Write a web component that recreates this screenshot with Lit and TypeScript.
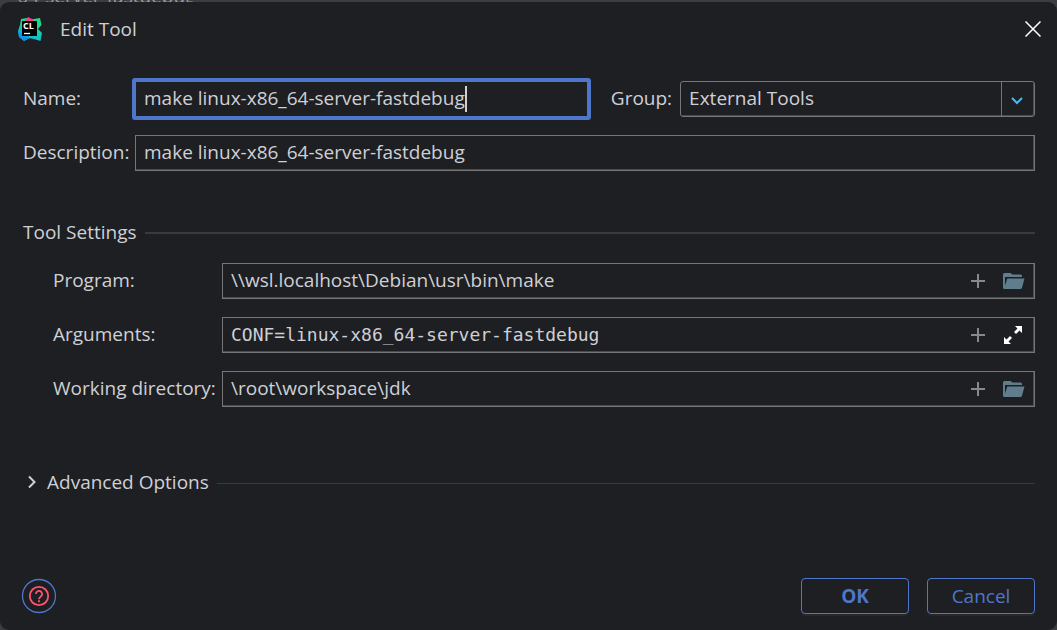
import { LitElement, html, css, svg } from "lit";
import { customElement, property, state } from "lit/decorators.js";

const plusIcon = svg`<svg width="14" height="14" viewBox="0 0 14 14"><path d="M7 0v14M0 7h14" stroke="#868a8c" stroke-width="2" fill="none"/></svg>`;
const folderIcon = svg`<svg width="22" height="16" viewBox="0 0 22 16"><path d="M0 14.500V1.500Q0 0 1.500 0H7.500L9.500 1.500H17.500Q19 1.500 19 3V4H2V12.500L4.300 5.500H21.500L19 14.700Q18.600 16 17.400 16H1.500Q0 16 0 14.500Z" fill="#5f7d8c"/></svg>`;
const expandIcon = svg`<svg width="20" height="18" viewBox="0 0 20 18"><path d="M11 0H18V7L15.500 4.500L12 8L10 6L13.500 2.500ZM0 11L2.500 13.500L6 10L8 12L4.500 15.500L7 18H0Z" fill="#fff"/></svg>`;

@customElement("path-field")
export class PathField extends LitElement {
  @property() label = "";
  @property() value = "";
  @property() action = "browse";
  @property({ type: Boolean }) mono = false;

  static styles = css`
    :host { display: contents; }
    label { white-space: nowrap; line-height: 24px; padding-bottom: 2px; }
    .box { display: flex; align-items: center; height: 36px; box-sizing: border-box; border: 1px solid #757678; box-shadow: inset -1px -1px #4a4b4e; padding: 0 9px 0 8px; min-width: 0; }
    input { flex: 1; min-width: 0; border: 0; padding: 0 0 2px; background: none; outline: none; color: inherit; font: inherit; line-height: 24px; }
    .mono { font-family: "DejaVu Sans Mono", "Liberation Mono", monospace; font-size: 18px; padding: 0; }
    button { display: grid; place-items: center; border: 0; padding: 0; background: none; width: 22px; height: 24px; }
    .add { width: 14px; margin-right: 18px; }
  `;

  render() {
    return html`
      <label for="field">${this.label}</label>
      <div class="box">
        <input id="field" class=${this.mono ? "mono" : ""} .value=${this.value} spellcheck="false" />
        <button class="add" aria-label="Insert macro">${plusIcon}</button>
        <button aria-label=${this.action}>${this.action === "expand" ? expandIcon : folderIcon}</button>
      </div>
    `;
  }
}

@customElement("app-root")
export class AppRoot extends LitElement {
  @state() name = "make linux-x86_64-server-fastdebug";

  static styles = css`
    :host { display: flex; flex-direction: column; min-height: 100vh; background: #3c3d3f; color: #ced0d6; font-family: "Open Sans", "Noto Sans", sans-serif; font-size: 19px; line-height: 24px; }
    .behind { height: 2px; overflow: hidden; display: flex; align-items: flex-end; padding-left: 9px; line-height: 12px; color: #98999c; }
    .dialog { flex: 1; display: flex; flex-direction: column; box-sizing: border-box; background: #1e1f22; border-radius: 9px; padding: 12px 22px 16px 23px; }
    header { display: flex; align-items: center; height: 30px; }
    .logo { width: 26px; height: 26px; margin: 0 17px 0 -6px; font-family: "Open Sans", sans-serif; font-size: 9px; font-weight: 700; }
    h1 { margin: 0; flex: 1; font-size: 19px; font-weight: 400; line-height: 24px; }
    button { font: inherit; color: inherit; background: none; border: 0; padding: 0; }
    .close { width: 24px; height: 24px; display: grid; place-items: center; margin-right: -10px; }
    .general { display: grid; grid-template-columns: 103px 465fr auto 355fr; align-items: center; margin-top: 34px; row-gap: 15px; }
    label { white-space: nowrap; padding-bottom: 2px; }
    .text { box-sizing: border-box; height: 36px; border: 1px solid #757678; box-shadow: inset -1px -1px #4a4b4e; background: none; color: inherit; font: inherit; padding: 0 8px 2px; margin-left: 9px; outline: none; min-width: 0; grid-column: 2 / -1; }
    .focused { display: flex; align-items: center; box-sizing: border-box; height: 42px; border: 4px solid #4e77cc; border-radius: 3px; padding: 0 8px; margin: 0 0 0 6px; min-width: 0; }
    .focused input { field-sizing: content; border: 0; padding: 0 0 2px; background: none; outline: none; color: inherit; font: inherit; caret-color: transparent; max-width: 100%; }
    .caret { width: 2px; height: 26px; background: #ced0d6; flex: none; }
    .group { margin: 0 8px 0 20px; }
    .combo { display: grid; grid-template-columns: 1fr 33px; box-sizing: border-box; height: 36px; border: 1px solid #757678; border-radius: 3px; box-shadow: inset -1px -1px #4a4b4e; }
    .combo select { grid-area: 1 / 1 / 2 / 3; appearance: none; background: none; border: 0; outline: none; color: inherit; font: inherit; padding: 0 8px 2px; min-width: 0; }
    .arrow { grid-area: 1 / 2; display: grid; place-items: center; border-left: 1px solid #757678; pointer-events: none; padding: 4px 2px 0 0; }
    .section { display: flex; align-items: center; gap: 8px; margin: 49px 0 0; }
    h2 { margin: 0; padding-bottom: 2px; font-size: inherit; font-weight: 400; }
    .rule { flex: 1; height: 2px; background: #393a3c; }
    .thin { height: 1px; }
    .settings { display: grid; grid-template-columns: 161px 1fr; align-items: center; gap: 18px 8px; padding-left: 30px; margin-top: 17px; }
    .advanced { display: flex; align-items: center; gap: 8px; margin-top: 63px; }
    .toggle { display: flex; align-items: center; gap: 10px; padding: 0 0 2px 4px; }
    footer { display: flex; align-items: center; gap: 18px; margin-top: auto; }
    .help { width: 36px; height: 36px; display: grid; place-items: center; margin: 0 auto 0 -2px; }
    .action { box-sizing: border-box; width: 108px; height: 36px; border: 1px solid #4e77cc; border-radius: 4px; color: #4e77cc; box-shadow: 0 2px #26272a; }
    .primary { font-weight: 700; }
  `;

  render() {
    return html`
      <div class="behind">_64-server-fastdebug</div>
      <main class="dialog">
        <header>
          <svg class="logo" viewBox="0 0 26 26">
            <defs>
              <linearGradient id="left" x1="0" y1="0" x2="0" y2="1"><stop offset="0.200" stop-color="#21d789"/><stop offset="0.700" stop-color="#0aa5e8"/></linearGradient>
              <linearGradient id="right" x1="0" y1="0" x2="0" y2="1"><stop offset="0.300" stop-color="#21d789"/><stop offset="0.900" stop-color="#0fc0c8"/></linearGradient>
            </defs>
            <path d="M4 3L10 2L13 5V22L7 25L2 21L1 15L3 9Z" fill="url(#left)"/>
            <path d="M12 4L17 3L23 2L24.500 9L21 13L25 17L23.500 25L17 23L12 22Z" fill="url(#right)"/>
            <path d="M8 5L11 1L15 3L17 5Z" fill="#fb3a8f"/>
            <path d="M1 15L6 20L12 22L7 25L2 21Z" fill="#0b94e6"/>
            <rect x="5" y="5" width="15" height="15"/>
            <text x="6" y="13" fill="#fff">CL</text>
            <path d="M7 17.500h6" stroke="#fff" stroke-width="1.300"/>
          </svg>
          <h1>Edit Tool</h1>
          <button class="close" aria-label="Close"><svg width="16" height="16" viewBox="0 0 16 16"><path d="M.5.5l15 15M15.500.5l-15 15" stroke="#fff" stroke-width="1.500"/></svg></button>
        </header>
        <section class="general">
          <label for="name">Name:</label>
          <div class="focused">
            <input id="name" .value=${this.name} spellcheck="false" /><span class="caret"></span>
          </div>
          <label class="group" for="group">Group:</label>
          <div class="combo">
            <select id="group"><option>External Tools</option></select>
            <span class="arrow"><svg width="12" height="8" viewBox="0 0 12 8"><path d="M1 1l5 5l5-5" stroke="#4ab8f0" stroke-width="2" fill="none"/></svg></span>
          </div>
          <label for="description">Description:</label>
          <input id="description" class="text" .value=${this.name} spellcheck="false" />
        </section>
        <div class="section"><h2>Tool Settings</h2><span class="rule"></span></div>
        <section class="settings">
          <path-field label="Program:" value="\\\\wsl.localhost\\Debian\\usr\\bin\\make"></path-field>
          <path-field label="Arguments:" value="CONF=linux-x86_64-server-fastdebug" action="expand" mono></path-field>
          <path-field label="Working directory:" value="\\root\\workspace\\jdk"></path-field>
        </section>
        <div class="advanced">
          <button class="toggle" aria-expanded="false"><svg width="10" height="14" viewBox="0 0 10 14"><path d="M2 1.500l5.500 5.500L2 12.500" stroke="#ced0d6" stroke-width="2" fill="none"/></svg>Advanced Options</button>
          <span class="rule thin"></span>
        </div>
        <footer>
          <button class="help" aria-label="Help"><svg width="36" height="36" viewBox="0 0 36 36" fill="none"><circle cx="18" cy="18" r="16.500" stroke="#4e77cc" stroke-width="1.300"/><g stroke="#ff5370" stroke-width="1.800"><circle cx="18" cy="18" r="9.200"/><path d="M14.900 16a3.100 3.100 0 1 1 5.300 2.200c-1 1-2.200 1.400-2.200 3.100M18 22.300v1.900"/></g></svg></button>
          <button class="action primary">OK</button>
          <button class="action">Cancel</button>
        </footer>
      </main>
    `;
  }
}
